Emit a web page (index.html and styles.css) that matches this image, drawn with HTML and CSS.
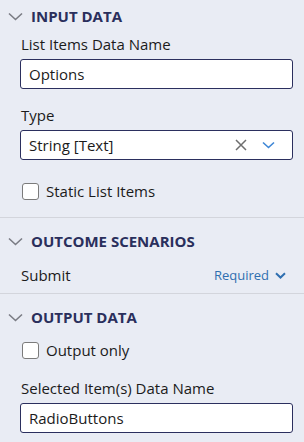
FILE: index.html
```html
<!DOCTYPE html>
<html lang="en">
<head>
  <meta charset="UTF-8">
  <title>Step Properties</title>
  <link rel="stylesheet" href="styles.css">
</head>
<body>
  <div class="panel">
    <!-- Input data -->
    <div class="section first">
      <div class="section-header">
        <svg class="caret" width="15" height="9" viewBox="0 0 15 9"><path d="M1 1.5l6.5 6 6.5-6" fill="none" stroke="#7a7c84" stroke-width="1.6"/></svg>
        <span>INPUT DATA</span>
      </div>
      <div class="field">
        <label class="field-label">List Items Data Name</label>
        <div class="text-input">Options</div>
      </div>
      <div class="field">
        <label class="field-label">Type</label>
        <div class="text-input select">
          <span class="select-value">String [Text]</span>
          <svg class="clear" width="12" height="12" viewBox="0 0 12 12"><path d="M1 1l10 10M11 1L1 11" stroke="#6e6e6e" stroke-width="1.5"/></svg>
          <svg class="drop" width="13" height="8" viewBox="0 0 13 8"><path d="M1 1.5l5.5 5 5.5-5" fill="none" stroke="#3d86d6" stroke-width="1.6"/></svg>
        </div>
      </div>
      <div class="check-row">
        <span class="checkbox"></span>
        <span>Static List Items</span>
      </div>
    </div>

    <!-- Outcome scenarios -->
    <div class="section">
      <div class="section-header">
        <svg class="caret" width="15" height="9" viewBox="0 0 15 9"><path d="M1 1.5l6.5 6 6.5-6" fill="none" stroke="#7a7c84" stroke-width="1.6"/></svg>
        <span>OUTCOME SCENARIOS</span>
      </div>
      <div class="outcome-row">
        <span>Submit</span>
        <span class="required">Required
          <svg width="11" height="7" viewBox="0 0 11 7"><path d="M1 1.2l4.5 4.3 4.5-4.3" fill="none" stroke="#2f6fb0" stroke-width="2"/></svg>
        </span>
      </div>
    </div>

    <!-- Output data -->
    <div class="section">
      <div class="section-header">
        <svg class="caret" width="15" height="9" viewBox="0 0 15 9"><path d="M1 1.5l6.5 6 6.5-6" fill="none" stroke="#7a7c84" stroke-width="1.6"/></svg>
        <span>OUTPUT DATA</span>
      </div>
      <div class="check-row tight">
        <span class="checkbox"></span>
        <span>Output only</span>
      </div>
      <div class="field">
        <label class="field-label">Selected Item(s) Data Name</label>
        <div class="text-input">RadioButtons</div>
      </div>
    </div>
  </div>
</body>
</html>
```

FILE: styles.css
```css
body {
  margin: 0;
  background-color: #e9ecf4;
  font-family: "Open Sans", "Noto Sans", sans-serif;
  font-size: 15px;
  color: #1b1b1b;
}
.panel {
  width: 304px;
}
.section {
  padding: 7px 0 8px;
  border-bottom: 1px solid #d3d5dc;
}
.section.first {
  padding-top: 0;
  padding-bottom: 16px;
}
.section:last-child {
  border-bottom: none;
}
.section-header {
  display: flex;
  align-items: center;
  height: 32px;
  padding-left: 8px;
  gap: 8px;
  font-weight: bold;
  font-size: 15px;
  color: #2a2f5c;
}
.field {
  padding: 2px 11px 0 20px;
}
.field + .field {
  margin-top: 14px;
}
.field-label {
  display: block;
  height: 20px;
  line-height: 20px;
  margin-bottom: 5px;
  padding-left: 1px;
}
.text-input {
  box-sizing: border-box;
  height: 30px;
  padding: 0 8px;
  line-height: 28px;
  background-color: #fff;
  border: 1px solid #2b2f5e;
  border-radius: 3px;
}
.select {
  display: flex;
  align-items: center;
}
.select-value {
  flex: 1;
}
.clear {
  margin-right: 15px;
}
.drop {
  margin-right: 9px;
}
.check-row {
  display: flex;
  align-items: center;
  gap: 7px;
  height: 20px;
  margin-top: 21px;
  padding-left: 22px;
}
.check-row.tight {
  margin-top: 7px;
  margin-bottom: 16px;
}
.checkbox {
  box-sizing: border-box;
  width: 17px;
  height: 17px;
  background-color: #fff;
  border: 1px solid #7b7b7b;
  border-radius: 3px;
}
.outcome-row {
  display: flex;
  justify-content: space-between;
  align-items: center;
  height: 20px;
  margin-top: 8px;
  padding: 0 18px 0 21px;
}
.required {
  display: flex;
  align-items: center;
  gap: 6px;
  color: #2f6fb0;
  font-size: 13px;
}
```
